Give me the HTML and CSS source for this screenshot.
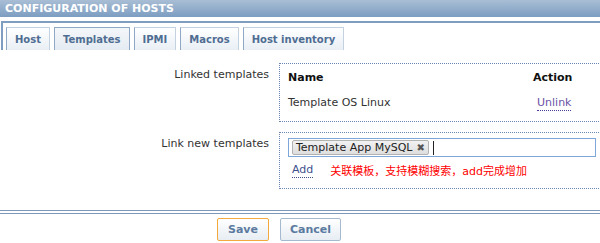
FILE: index.html
```html
<!DOCTYPE html>
<html>
<head>
  <meta charset="UTF-8">
  <title>Configuration of hosts</title>
  <link rel="stylesheet" href="styles.css">
</head>
<body>
<div class="header">CONFIGURATION OF HOSTS</div>

<div class="tabs">
  <span class="tab">Host</span>
  <span class="tab active">Templates</span>
  <span class="tab">IPMI</span>
  <span class="tab">Macros</span>
  <span class="tab">Host inventory</span>
</div>

<div class="form">
  <div class="label">Linked templates</div>
  <div class="group linked">
    <table class="list">
      <tr>
        <th class="name">Name</th>
        <th>Action</th>
      </tr>
      <tr>
        <td>Template OS Linux</td>
        <td><a class="unlink">Unlink</a></td>
      </tr>
    </table>
  </div>

  <div class="label">Link new templates</div>
  <div class="group">
    <div class="multiselect">
      <span class="chip">Template App MySQL <span class="remove">&#x2716;</span></span>
      <span class="caret"></span>
    </div>
    <div class="add-row">
      <a class="add">Add</a>
      <span class="note">关联模板，支持模糊搜索，add完成增加</span>
    </div>
  </div>
</div>

<div class="footer">
  <div class="left"><button class="btn save">Save</button></div>
  <div class="right"><button class="btn cancel">Cancel</button></div>
</div>
</body>
</html>
```

FILE: styles.css
```css
body {
  margin: 0;
  font-family: "DejaVu Sans", Verdana, sans-serif;
  font-size: 11px;
  color: #333;
  background: #fff;
  overflow: hidden;
}

.header {
  height: 17px;
  line-height: 17px;
  padding-left: 5px;
  font-weight: bold;
  color: #fff;
  background: linear-gradient(#a9bed5, #7c9dc1);
}

.tabs {
  display: flex;
  gap: 4px;
  margin: 4px 0 0 1px;
  padding: 4px 0 0 3px;
  border-top: 2px solid #7f9dc0;
  border-left: 2px solid #7f9dc0;
  height: 23px;
}
.tab {
  display: flex;
  align-items: center;
  padding: 0 8px;
  font-size: 10px;
  font-weight: bold;
  color: #4f6d92;
  border: 1px solid #c3d1e0;
  border-left-color: #8ea8c5;
  border-bottom: none;
  background: linear-gradient(#ffffff, #e9eff5);
}
.tab.active {
  border-color: #8ea8c5;
  background: linear-gradient(#f4f7fa, #e4ebf2);
}

.form {
  display: grid;
  grid-template-columns: 269px 330px;
  column-gap: 10px;
  row-gap: 10px;
  margin-top: 13px;
}
.label {
  text-align: right;
  padding-top: 5px;
}
.group {
  border: 1px dotted #6a82b4;
  border-right: none;
  padding: 5px 0 0 8px;
  height: 50px;
}
.group.linked {
  height: 51px;
  padding-top: 6px;
}

.list {
  border-collapse: collapse;
  width: 290px;
}
.list th {
  text-align: left;
  color: #111;
  padding: 1px 0 8px;
}
.list th.name {
  width: 245px;
}
.list td {
  padding: 4px 0;
}
.unlink {
  margin-left: 4px;
  color: #6b52a6;
  border-bottom: 1px dotted #4b3d9a;
  padding-bottom: 1px;
}

.multiselect {
  display: flex;
  align-items: center;
  width: 300px;
  height: 17px;
  padding: 0 3px;
  border: 1px solid #7ea6d8;
}
.chip {
  display: flex;
  align-items: center;
  gap: 4px;
  height: 13px;
  padding: 0 3px;
  border: 1px solid #b2b2b2;
  border-radius: 2px;
  background: linear-gradient(#f2f2f2, #dedede);
  color: #222;
}
.remove {
  font-size: 10px;
  color: #555;
}
.caret {
  width: 1px;
  height: 14px;
  margin-left: 4px;
  background: #222;
}

.add-row {
  display: flex;
  align-items: center;
  gap: 17px;
  margin-top: 5px;
  padding-left: 4px;
}
.add {
  color: #3e4f8b;
  border-bottom: 1px dotted #3e4f8b;
  padding-bottom: 1px;
}
.note {
  color: #ff0000;
  font-family: "DejaVu Sans", "Noto Sans CJK SC", sans-serif;
  font-size: 11px;
}

.footer {
  display: grid;
  grid-template-columns: 269px auto;
  column-gap: 11px;
  margin-top: 21px;
  padding-top: 4px;
  border-top: 1px solid #7d98b8;
}
.footer::before {
  content: "";
  display: block;
  grid-column: 1 / 3;
  border-top: 1px solid #7d98b8;
  margin: -2px 0 0;
  height: 4px;
}
.footer .left {
  text-align: right;
}
.btn {
  height: 23px;
  padding: 0;
  font-family: "DejaVu Sans", Verdana, sans-serif;
  font-size: 11px;
  font-weight: bold;
  color: #5b7aa0;
  border: 1px solid #a5b9cf;
  border-radius: 2px;
  background: linear-gradient(#ffffff, #e7edf3);
}
.btn.save {
  width: 52px;
  border-color: #f4a93d;
}
.btn.cancel {
  width: 61px;
}
```
